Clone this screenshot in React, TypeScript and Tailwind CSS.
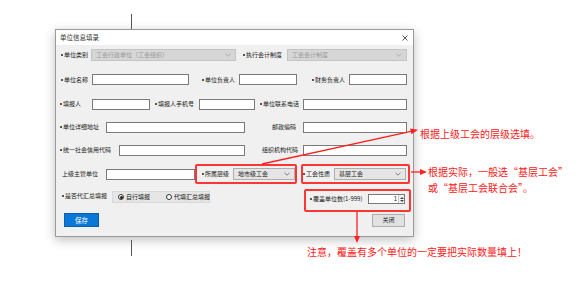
import React from "react";

const FONT = { fontFamily: '"Noto Sans CJK SC", "Noto Sans", sans-serif' };

// "•" at the start of a label is drawn as a small tight dot, like the WinForms form
const Label: React.FC<{ className?: string; children: string }> = ({ className = "", children }) => {
  const req = children.startsWith("•");
  const text = req ? children.slice(1) : children;
  return (
    <div className={`text-[6px] leading-[8px] text-[#1a1a1a] whitespace-nowrap shrink-0 ${className}`}>
      {req && <span className="inline-block w-[2px] h-[2px] rounded-full bg-[#222] mr-[1px] align-middle" />}
      {text}
    </div>
  );
};

const TextBox: React.FC<{ className?: string }> = ({ className = "" }) => (
  <div className={`h-[11px] shrink-0 bg-white border border-[#7a7a7a] ${className}`} />
);

const Chevron: React.FC<{ color?: string }> = ({ color = "#777" }) => (
  <svg width="6" height="4" viewBox="0 0 6 4" className="shrink-0">
    <path d="M0.5 0.8 L3 3.2 L5.5 0.8" fill="none" stroke={color} strokeWidth="0.8" />
  </svg>
);

const Combo: React.FC<{ className?: string; value: string; disabled?: boolean }> = ({
  className = "",
  value,
  disabled,
}) => (
  <div
    className={`h-[12px] shrink-0 flex items-center justify-between pl-[4px] pr-[4px] border ${
      disabled ? "bg-[#d6d6d6] border-[#c4c4c4] text-[#9a9a9a]" : "bg-[#e5e5e5] border-[#adadad] text-[#1a1a1a]"
    } ${className}`}
  >
    <span className="text-[6px] leading-none whitespace-nowrap">{value}</span>
    <Chevron color={disabled ? "#a8a8a8" : "#666"} />
  </div>
);

const Radio: React.FC<{ checked?: boolean; text: string; className?: string }> = ({ checked, text, className = "" }) => (
  <div className={`flex items-center gap-[2px] ${className}`}>
    <span className="w-[6px] h-[6px] rounded-full border border-[#333] bg-white flex items-center justify-center">
      {checked && <span className="w-[3px] h-[3px] rounded-full bg-[#222]" />}
    </span>
    <span className="text-[6px] leading-none text-[#1a1a1a] whitespace-nowrap">{text}</span>
  </div>
);

const Dialog: React.FC = () => (
  <div className="ml-[55px] mt-[29px] w-[359px] shrink-0 border border-[#9a9a9a] bg-[#f0f0f0] shadow-[0_3px_10px_rgba(0,0,0,0.25)]">
    {/* title bar */}
    <div className="h-[15px] bg-white flex items-center justify-between pl-[4px] pr-[5px]">
      <span className="text-[6.5px] leading-none text-[#333]">单位信息填录</span>
      <svg width="6" height="6" viewBox="0 0 6 6">
        <path d="M0.5 0.5 L5.5 5.5 M5.5 0.5 L0.5 5.5" stroke="#444" strokeWidth="0.9" />
      </svg>
    </div>

    <div className="flex flex-col pb-[9px]">
      {/* row 1 */}
      <div className="h-[20px] flex items-center">
        <Label className="ml-[5px] w-[30px]">•单位类别</Label>
        <Combo disabled className="w-[145px]" value="工会行政单位（工会组织）" />
        <Label className="ml-[7px] w-[44px]">•执行会计制度</Label>
        <Combo disabled className="w-[120px]" value="工会会计制度" />
      </div>

      {/* row 2 */}
      <div className="h-[29px] flex items-center">
        <Label className="ml-[5px] w-[31px]">•单位名称</Label>
        <TextBox className="w-[97px]" />
        <Label className="ml-[13px] w-[37px]">•单位负责人</Label>
        <TextBox className="w-[58px]" />
        <Label className="ml-[15px] w-[37px]">•财务负责人</Label>
        <TextBox className="w-[58px]" />
      </div>

      {/* row 3 */}
      <div className="h-[20px] flex items-center">
        <Label className="ml-[4px] w-[32px]">•填报人</Label>
        <TextBox className="w-[58px]" />
        <Label className="ml-[5px] w-[44px]">•填报人手机号</Label>
        <TextBox className="w-[56px]" />
        <Label className="ml-[5px] w-[43px]">•单位联系电话</Label>
        <TextBox className="w-[104px]" />
      </div>

      {/* row 4 */}
      <div className="h-[26px] flex items-center">
        <Label className="ml-[4px] w-[46px]">•单位详细地址</Label>
        <TextBox className="w-[139px]" />
        <Label className="w-[58px] text-right pr-[7px]">邮政编码</Label>
        <TextBox className="w-[104px]" />
      </div>

      {/* row 5 */}
      <div className="h-[20px] flex items-center">
        <Label className="ml-[4px] w-[59px]">•统一社会信用代码</Label>
        <TextBox className="w-[126px]" />
        <Label className="w-[58px] text-right pr-[5px]">组织机构代码</Label>
        <TextBox className="w-[104px]" />
      </div>

      {/* row 6 */}
      <div className="h-[28px] flex items-center">
        <Label className="ml-[6px] w-[44px]">上级主管单位</Label>
        <TextBox className="w-[89px]" />
        <div className="w-[102px] h-[20px] shrink-0 border-2 border-[#ff3535] rounded-[2px] flex items-center">
          <Label className="ml-[5px] w-[31px]">•所属层级</Label>
          <Combo className="w-[62px]" value="地市级工会" />
        </div>
        <div className="ml-[4px] w-[109px] h-[20px] shrink-0 border-2 border-[#ff3535] rounded-[2px] flex items-center">
          <Label className="w-[31px]">•工会性质</Label>
          <Combo className="w-[72px]" value="基层工会" />
        </div>
      </div>

      {/* row 7 */}
      <div className="h-[20px] flex items-start">
        <Label className="ml-[6px] w-[50px] mt-[4px]">•是否代汇总填报</Label>
        <div className="w-[98px] h-[12px] mt-[3px] shrink-0 bg-[#e6e6e6] border border-[#d9d9d9] flex items-center">
          <Radio checked text="自行填报" className="ml-[5px]" />
          <Radio text="代填汇总填报" className="ml-[16px]" />
        </div>
        <div className="ml-[94px] mt-[1px] w-[107px] h-[23px] shrink-0 border-2 border-[#ff3535] rounded-[2px] flex items-center">
          <Label className="ml-[4px] w-[58px] -mt-[3px]">•覆盖单位数(1-999)</Label>
          <div className="w-[37px] h-[10px] -mt-[3px] shrink-0 bg-white border border-[#7a7a7a] flex items-center justify-end">
            <span className="text-[6px] leading-none text-[#1a1a1a] mr-[1px]">1</span>
            <div className="w-[6px] h-full border-l border-[#c8c8c8] bg-[#f2f2f2] flex flex-col items-center justify-center gap-[1px]">
              <svg width="4" height="2" viewBox="0 0 4 2"><path d="M0 2 L2 0 L4 2 Z" fill="#444" /></svg>
              <svg width="4" height="2" viewBox="0 0 4 2"><path d="M0 0 L2 2 L4 0 Z" fill="#444" /></svg>
            </div>
          </div>
        </div>
      </div>

      {/* row 8 */}
      <div className="mt-[5px] h-[14px] flex items-center">
        <div className="ml-[8px] w-[35px] h-[14px] shrink-0 bg-[#0a78d7] border border-[#0a5fae] flex items-center justify-center">
          <span className="text-[6.5px] leading-none text-white">保存</span>
        </div>
        <div className="ml-[273px] w-[33px] h-[13px] shrink-0 bg-[#e1e1e1] border border-[#adadad] flex items-center justify-center">
          <span className="text-[6px] leading-none text-[#1a1a1a]">关闭</span>
        </div>
      </div>
    </div>
  </div>
);

export default function App() {
  return (
    <div className="relative w-[588px] h-[300px] bg-white overflow-hidden" style={FONT}>
      <div className="flex items-start">
        <Dialog />
        <div className="flex flex-col mt-[128px] text-[10px] text-[#ff2020] whitespace-nowrap">
          <p className="ml-[6px] leading-[12px]">根据上级工会的层级选填。</p>
          <p className="ml-[14px] mt-[24px] leading-[16px]">根据实际，一般选“基层工会”</p>
          <p className="ml-[14px] leading-[16px]">或“基层工会联合会”。</p>
        </div>
      </div>
      <p className="ml-[307px] mt-[9px] text-[10px] leading-[12px] text-[#ff2020] whitespace-nowrap">
        注意，覆盖有多个单位的一定要把实际数量填上！
      </p>

      {/* annotation arrows */}
      <svg className="absolute inset-0 pointer-events-none" width="588" height="300" viewBox="0 0 588 300">
        <line x1="131.5" y1="14" x2="131.5" y2="29" stroke="#555" strokeWidth="1" />
        <line x1="131.5" y1="240" x2="131.5" y2="256" stroke="#555" strokeWidth="1" />
        <line x1="262" y1="164" x2="411" y2="131.3" stroke="#ff2020" strokeWidth="1.3" />
        <path d="M418 129.8 L410 128.6 L411.6 134.2 Z" fill="#ff2020" />
        <line x1="411" y1="172" x2="421" y2="172" stroke="#ff2020" strokeWidth="1.3" />
        <path d="M427 172 L420 169 L420 175 Z" fill="#ff2020" />
        <line x1="357" y1="212" x2="357" y2="236" stroke="#ff2020" strokeWidth="1.3" />
        <path d="M357 243 L354 236 L360 236 Z" fill="#ff2020" />
      </svg>
    </div>
  );
}
